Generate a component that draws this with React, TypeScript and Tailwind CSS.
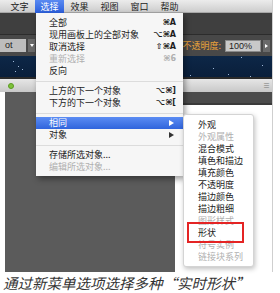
import React from 'react';

type Row =
  | { label: string; keys?: string; disabled?: boolean; sub?: boolean; active?: boolean }
  | 'sep';

const mainMenu: Row[] = [
  { label: '全部', keys: '⌘A' },
  { label: '现用画板上的全部对象', keys: '⌥⌘A' },
  { label: '取消选择', keys: '⇧⌘A' },
  { label: '重新选择', keys: '⌘6', disabled: true },
  { label: '反向' },
  'sep',
  { label: '上方的下一个对象', keys: '⌥⌘]' },
  { label: '下方的下一个对象', keys: '⌥⌘[' },
  'sep',
  { label: '相同', sub: true, active: true },
  { label: '对象', sub: true },
  'sep',
  { label: '存储所选对象...' },
  { label: '编辑所选对象...', disabled: true },
];

const subMenu = [
  { label: '外观' },
  { label: '外观属性', disabled: true },
  { label: '混合模式' },
  { label: '填色和描边' },
  { label: '填充颜色' },
  { label: '不透明度' },
  { label: '描边颜色' },
  { label: '描边粗细' },
  { label: '图形样式', disabled: true },
  { label: '形状' },
  { label: '符号实例', disabled: true },
  { label: '链接块系列', disabled: true },
];

const stars = [
  [13, 5], [18, 10], [15, 15], [22, 13], [48, 8], [70, 18], [96, 4],
  [150, 12], [190, 19], [213, 12], [228, 18], [241, 1], [262, 9], [250, 20],
];

const topMenus = ['文字', '选择', '效果', '视图', '窗口', '帮助'];

const App: React.FC = () => {
  return (
    <div className="w-[280px] h-[293px] bg-white font-['Noto_Sans_CJK_SC',sans-serif] overflow-hidden">
      <div className="relative w-[273px] h-[272px] flex flex-col bg-white border-r border-[#cfcfcf]">
        {/* menu bar */}
        <div className="h-[13px] flex items-center pl-[5px] bg-gradient-to-b from-[#ececec] to-[#cdcdcd] border-b border-[#a8a8a8]">
          {topMenus.map((m) => (
            <div
              key={m}
              className={`w-[29px] mr-[1px] h-[13px] flex items-center justify-center text-[9px] leading-[13px] ${
                m === '选择' ? 'bg-gradient-to-b from-[#5a8af2] to-[#2c5fdc] text-white' : 'text-[#222]'
              }`}
            >
              {m}
            </div>
          ))}
        </div>

        {/* tool bar */}
        <div className="h-[22px] bg-[#3f3f3f] border-b border-[#2c2c2c]" />

        {/* control bar */}
        <div className="h-[21px] bg-[#484848] flex items-center">
          <div className="w-[26px] h-[13px] bg-[#bdbdbd] text-[9px] leading-[13px] text-[#222] pl-[5px] font-['Liberation_Sans',sans-serif]">
            ot
          </div>
          <div className="ml-[2px] w-[7px] h-[13px] bg-[#6a6a6a] flex items-center justify-center">
            <div className="w-0 h-0 border-l-[2px] border-r-[2px] border-t-[3px] border-l-transparent border-r-transparent border-t-white" />
          </div>
          <div className="ml-auto text-[9px] text-[#e8a23a] leading-[13px]">不透明度:</div>
          <div className="ml-[4px] w-[36px] h-[12px] bg-[#c9c9c9] border border-[#8a8a8a] text-[9px] leading-[10px] text-[#222] pl-[3px] font-['Liberation_Sans',sans-serif]">
            100%
          </div>
          <div className="ml-[2px] mr-[2px] w-[7px] h-[12px] bg-[#6a6a6a] flex items-center justify-center">
            <div className="w-0 h-0 border-t-[2px] border-b-[2px] border-l-[3px] border-t-transparent border-b-transparent border-l-white" />
          </div>
        </div>

        {/* artwork canvas */}
        <div className="relative h-[23px] bg-gradient-to-b from-[#0d2747] to-[#0a1f3b] border-b-2 border-[#2a2a2a]">
          {stars.map(([x, y], i) => (
            <div
              key={i}
              className="absolute w-[1px] h-[1px] bg-[#9fb8d8]"
              style={{ left: x, top: y }}
            />
          ))}
        </div>

        {/* panel header */}
        <div className="h-[13px] bg-gradient-to-b from-[#e6e6e6] to-[#c8c8c8] flex items-center pl-[8px] pr-[2px]">
          <div className="w-[6px] h-[6px] rounded-full bg-[#7ec23a] border border-[#5a9a22]" />
          <div className="ml-auto text-[7px] text-[#777] leading-none">≡</div>
        </div>

        {/* lower area */}
        <div className="flex-1 flex">
          <div className="w-[5px] bg-white" />
          <div className="w-[170px] bg-[#5b5b5b]" />
          <div className="flex-1 flex flex-col">
            <div className="h-[13px] bg-[#4b4b4b] border-b-2 border-[#3a3a3a]" />
            <div className="flex-1 bg-white" />
          </div>
        </div>

        {/* main dropdown */}
        <div className="absolute left-[36px] top-[13px] w-[147px] pt-[4px] pb-[3px] bg-[#f6f6f6] shadow-[2px_3px_6px_rgba(0,0,0,0.4)]">
          {mainMenu.map((r, i) =>
            r === 'sep' ? (
              <div key={i} className="h-[8px] flex items-center">
                <div className="w-full h-[1px] bg-[#dcdcdc]" />
              </div>
            ) : (
              <div
                key={i}
                className={`h-[12px] flex items-center justify-between pl-[13px] pr-[7px] text-[9px] leading-[12px] ${
                  r.active ? 'bg-gradient-to-b from-[#5b8cf3] to-[#3064dc] text-white' : r.disabled ? 'text-[#b0b0b0]' : 'text-[#1c1c1c]'
                }`}
              >
                <span>{r.label}</span>
                {r.keys && (
                  <span className="font-['DejaVu_Sans',sans-serif] text-[8px] font-bold">{r.keys}</span>
                )}
                {r.sub && (
                  <div
                    className={`mr-[2px] w-0 h-0 border-t-[3px] border-b-[3px] border-l-[5px] border-t-transparent border-b-transparent ${
                      r.active ? 'border-l-white' : 'border-l-[#333]'
                    }`}
                  />
                )}
              </div>
            )
          )}
        </div>

        {/* submenu */}
        <div className="absolute left-[183px] top-[114px] w-[71px] pt-[4px] pb-[3px] bg-white border border-[#d4d4d4] rounded-[3px] shadow-[1px_2px_5px_rgba(0,0,0,0.25)]">
          {subMenu.map((s) => (
            <div
              key={s.label}
              className={`h-[12px] pl-[14px] text-[9px] leading-[12px] ${s.disabled ? 'text-[#b0b0b0]' : 'text-[#1c1c1c]'}`}
            >
              {s.label}
            </div>
          ))}
          <div className="absolute left-[3px] top-[107px] w-[57px] h-[21px] border-2 border-[#e42424]" />
        </div>
      </div>

      {/* caption */}
      <div className="pl-[3px] h-[21px] text-[14.5px] leading-[21px] italic text-[#333]">
        通过新菜单选项选择多种“实时形状”
      </div>
    </div>
  );
};

export default App;
